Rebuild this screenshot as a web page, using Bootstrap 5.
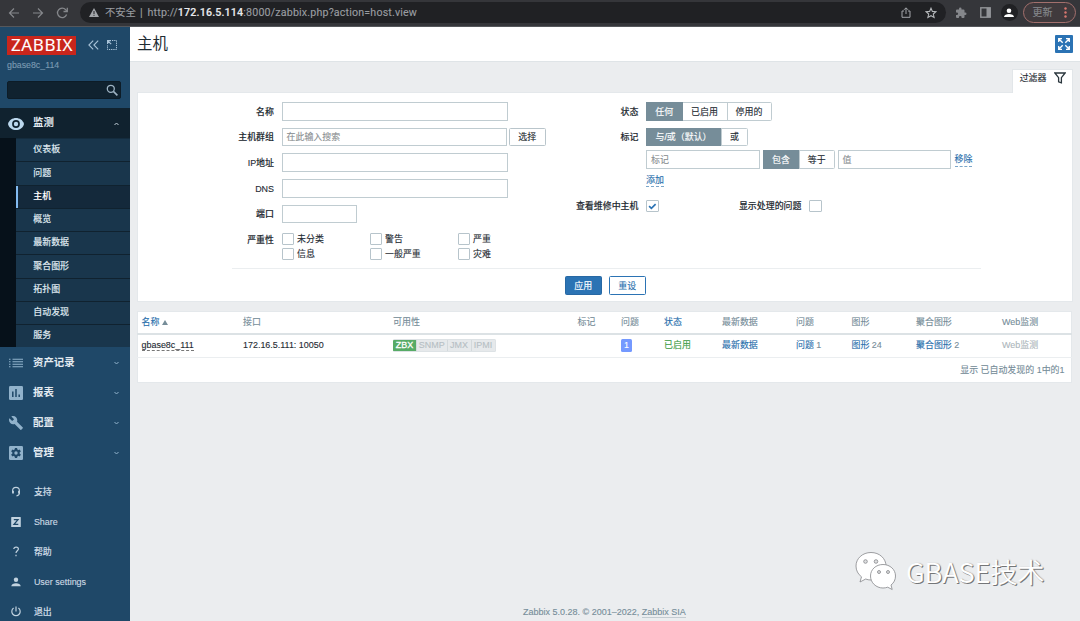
<!DOCTYPE html>
<html lang="zh-CN">
<head>
<meta charset="utf-8">
<title>主机</title>
<link href="https://cdn.jsdelivr.net/npm/bootstrap@5.3.0/dist/css/bootstrap.min.css" rel="stylesheet">
<style>
body{font-family:"Liberation Sans","Noto Sans CJK SC",sans-serif;font-size:8.95px;line-height:1.4;color:#1f2c33;background:#ebedef;height:621px;overflow:hidden;-webkit-text-stroke:.12px}
a,a:hover{text-decoration:none;color:#2a70ad}
svg{display:block;flex:none}
.browser{height:27px;background:#35363a;border-bottom:1px solid #55575b;color:#9a9da1;padding:0 4px 1px 8px}
.address{width:866px;height:20.5px;margin-left:11px;border-radius:11px;background:#202124;padding:0 9px 0 9px;font-size:10.3px}
.address span{position:relative;top:1px}
.url{font-family:Roboto,sans-serif;font-size:10.7px;letter-spacing:.16px}
.url b{color:#e8eaed;font-weight:500}
.avatar{width:17px;height:17px;background:#202124;border-radius:50%}
.update{width:53px;height:21.5px;border:1.4px solid #a3706d;border-radius:11px;background:#403a3d;font-size:10px;color:#85888c}
.side{width:129.5px;height:594px;background:#1f4868;color:#d5e0e9}
.logo-z{background:#c9261c;color:#fff;width:69px;height:18.5px;font-family:"Noto Sans",sans-serif;font-size:17px;line-height:18px;text-align:center;letter-spacing:.6px;padding-left:1px;white-space:nowrap}
.server{font-size:8.8px;color:#7b9ab2;margin:4.5px 0 0 7px;height:13px}
.find{margin:8.5px 9px 0 6.5px;height:18.5px;background:#10222f;border:1px solid #0d1c27;border-radius:2px;padding-right:2px}
.mitem{height:30px;padding:1px 0 0 8px;font-size:10.4px;font-weight:700;color:#e3ebf1;-webkit-text-stroke:0}
.mitem svg:first-child{width:16px}
.mitem span{margin-left:9px}
.mitem .chev{margin:1px 10.5px 0 auto}
.mitem.open{background:#10222f;margin-top:9px}
.sub{padding-left:16px;background:#06111a}
.sub a{display:flex;align-items:center;height:23.27px;background:#19364c;border-top:1px solid #10222f;color:#dce5ec;padding:0 0 1px 17.3px;font-weight:500}
.sub a:first-child{border-top-color:#142c3e}
.sub a.sel{background:linear-gradient(#82baf0,#82baf0) 0 0/2.3px 100% no-repeat #14293b;color:#fff}
.low{height:30px;padding:1px 0 0 8px;color:#cddae4}
.low svg{width:16px}
.low span{margin-left:9.9px;font-weight:500}
.page-top{height:34.5px;background:#fff;border-bottom:1px solid #dfe4e7;padding:0 7px 0 7.5px;font-size:15.4px;-webkit-text-stroke:0}
.full{width:18.5px;height:18.5px;background:#2b73b4;border-radius:1px}
.content-pad{padding:7px 7.5px 0 7.5px}
.ftab{width:61px;height:24px;background:#fff;border:1px solid #e2e6e9;border-bottom:0;margin-bottom:-1px;padding-right:6px;gap:7px;position:relative}
.fpanel{height:210px;background:#fff;border:1px solid #e4e8eb}
.frow{display:flex;align-items:center;height:18.6px;margin-bottom:7px}
.flab{text-align:right;margin-right:7.5px;flex:none;font-weight:500;padding-top:1px}
.lcol{width:407.5px;padding-top:9.8px}
.lcol .flab{width:136px}
.rcol{padding-top:9.8px}
.rcol .flab{width:93px}
.inp{height:18.6px;border:1px solid #c0ccd1;background:#fff;padding:1px 4px 0;color:#8b8f92;display:flex;align-items:center}
.bt{height:18.6px;border:1px solid #b9c5cb;border-radius:1.5px;display:flex;align-items:center;justify-content:center;background:#fff;padding-top:1px}
.seg{display:flex;height:18.6px;border:1px solid #c0ccd1;border-radius:1.5px}
.seg span{display:flex;align-items:center;justify-content:center;border-left:1px solid #c0ccd1;padding-top:1px}
.seg span:first-child{background:#768d99;color:#fff;margin:-1px 0;border:0;margin-left:-1px}
.cb{width:12.5px;height:12.5px;border:1px solid #b7c4cb;border-radius:1px;flex:none;background:#fff}
.chk{display:grid;grid-template-columns:88px 88px 60px;row-gap:2.5px}
.chk div{display:flex;align-items:center;gap:3px;height:12.5px}
.chk b{font-weight:400;padding-top:1px}
.dash{border-bottom:1px dashed #7ba6c9;line-height:11.5px}
.acts{width:749px;margin:0 auto 0 93.5px;border-top:1px solid #ebeef0;gap:7.5px;padding:7.8px 0 0 333.5px}
.tbl{width:935px;table-layout:fixed;background:#fff;border:1px solid #e4e8eb;margin:9px 0 0;border-collapse:collapse}
.tbl th,.tbl td{padding:0 0 0 3.5px;vertical-align:middle;white-space:nowrap;font-weight:400}
.tbl th{height:22.5px;color:#768d99;border-bottom:2px solid #dce2e5}
.tbl tbody td{height:24px;border-bottom:1px solid #ebeef0;color:#768d99}
.tbl tfoot td{height:24.5px;text-align:right;padding:2px 6.5px 0 0;color:#768d99}
.av{display:inline-flex;height:12.5px;line-height:12.7px;border-radius:1.5px;overflow:hidden;background:#e6e9eb;color:#b6bfc4;vertical-align:middle;border:1px solid #dde2e5;border-left:0;margin-top:-1px}
.av span{border-left:1px solid #d3d9dc;text-align:center;margin:-1px 0}
.av span:first-child{background:#57ab66;color:#fff;border:0;-webkit-text-stroke:.3px #fff}
.num{display:inline-block;width:11px;height:13px;line-height:13px;background:#7499ff;color:#fff;border-radius:1.5px;text-align:center;vertical-align:middle}
.foot{position:absolute;left:523px;top:606px;color:#768d99;font-size:9px}
.foot span{border-bottom:1px solid #c3ccd1}
.mark-w{position:absolute;left:855px;top:551px;color:#fff;-webkit-text-stroke:0}
.mark-w b{font-weight:350;font-family:"Noto Sans CJK SC",sans-serif;font-size:27.3px;line-height:40px;text-shadow:1px 1px 0 #747678,1px 0 1px #a4a6a7;margin:-2px 0 0 6px;letter-spacing:-.15px}
</style>
<script src="https://cdn.jsdelivr.net/npm/bootstrap@5.3.0/dist/js/bootstrap.bundle.min.js"></script>
</head>
<body>
<header class="browser d-flex align-items-center">
 <svg width="12" height="12" viewBox="0 0 12 12" fill="none" stroke="#85878b" stroke-width="1.2"><path d="M11 6H1.5M6 1.5 1.5 6 6 10.500"/></svg>
 <svg class="ms-2 ps-1" width="16" height="12" viewBox="0 0 12 12" fill="none" stroke="#85878b" stroke-width="1.2"><path d="M1 6h9.500M6 1.500 10.500 6 6 10.500"/></svg>
 <svg style="margin-left:12px" width="13" height="12" viewBox="0 0 13 12" fill="none" stroke="#85878b" stroke-width="1.3"><path d="M10.600 7.500A4.700 4.700 0 1 1 9.700 2.700L11 4"/><path d="M11.300.8v3.700H7.500"/></svg>
 <div class="address d-flex align-items-center">
  <svg width="10" height="9" viewBox="0 0 10 9"><path d="M5 0 10 9H0z" fill="#a3a6aa"/><path d="M5 3v3M5 6.800v1" stroke="#202124"/></svg>
  <span style="margin-left:6px">不安全</span><span style="margin:0 5px 0 4px">|</span><span class="url">http://<b>172.16.5.114</b>:8000/zabbix.php?action=host.view</span>
  <svg class="ms-auto" style="margin-right:-2px" width="10" height="11" viewBox="0 0 10 11" fill="none" stroke="#a3a6aa"><path d="M3 4H1v6.300h8V4H7M5 7V1M3 2.800 5 .8l2 2"/></svg>
  <svg style="margin:0 0 0 16px" width="12" height="12" viewBox="0 0 12 12" fill="none" stroke="#b4b7ba" stroke-width="1.1"><path d="m6 1.200 1.400 3.200 3.500.3-2.600 2.300.8 3.500L6 8.700l-3.100 1.800.8-3.500L1.100 4.700l3.500-.3z"/></svg>
 </div>
 <svg style="margin-left:9px" width="12" height="12" viewBox="0 0 24 24" fill="#85878b"><path d="M20.500 11H19V7a2 2 0 0 0-2-2h-4V3.500a2.500 2.500 0 0 0-5 0V5H4a2 2 0 0 0-2 2v3.800h1.500a2.700 2.700 0 0 1 0 5.400H2V20a2 2 0 0 0 2 2h3.800v-1.500a2.700 2.700 0 0 1 5.400 0V22H17a2 2 0 0 0 2-2v-4h1.500a2.500 2.500 0 0 0 0-5z"/></svg>
 <svg style="margin-left:13px" width="11" height="11" viewBox="0 0 11 11"><rect x=".8" y=".8" width="9.400" height="9.400" fill="none" stroke="#929498" stroke-width="1.400"/><path d="M6.500 1h4v9h-4z" fill="#929498"/></svg>
 <div class="avatar d-flex align-items-center justify-content-center" style="margin-left:9.500px"><svg width="10" height="10" viewBox="0 0 10 10" fill="#fff"><circle cx="5" cy="2.700" r="2.300"/><path d="M0 9c0-4 10-4 10 0z"/></svg></div>
 <div class="update d-flex align-items-center justify-content-between" style="margin-left:5px;padding:0 8px 0 9px">更新<svg width="3" height="11" viewBox="0 0 3 11" fill="#d9776f"><circle cx="1.500" cy="1.500" r="1.200"/><circle cx="1.500" cy="5.500" r="1.200"/><circle cx="1.500" cy="9.500" r="1.200"/></svg></div>
</header>
<div class="d-flex">
 <aside class="side flex-shrink-0">
  <div class="d-flex align-items-center" style="padding:9px 0 0 7px">
   <div class="logo-z">ZABBIX</div>
   <svg style="margin-left:12px" width="11" height="10" viewBox="0 0 11 10" fill="none" stroke="#a9c3d8" stroke-width="1.100"><path d="M5.200.6.9 5l4.300 4.400M10.200.6 5.900 5l4.300 4.400"/></svg>
   <svg style="margin-left:7.500px" width="10" height="10" viewBox="0 0 10 10" fill="none" stroke="#a9c3d8"><path d="M5 .5h4.500v9h-9V5" stroke-dasharray="1.300 .9"/><path d="M.6 4V.6H4M.8.8l3.400 3.400" stroke-width="1.200"/></svg>
  </div>
  <div class="server">gbase8c_114</div>
  <div class="find d-flex align-items-center justify-content-end"><svg width="12" height="12" viewBox="0 0 12 12" fill="none" stroke="#9fb4c4"><circle cx="4.800" cy="4.800" r="3.500" stroke-width="1.300"/><path d="m7.400 7.400 4 4" stroke-width="1.600"/></svg></div>
  <div class="mitem open d-flex align-items-center"><svg width="16" height="12" viewBox="0 0 16 12"><path d="M0 6C2-2 14-2 16 6 14 14 2 14 0 6z" fill="#bcd8ee"/><circle cx="8" cy="6" r="3.900" fill="#10222f"/><circle cx="8" cy="6" r="2.200" fill="#bcd8ee"/></svg><span>监测</span><svg class="chev" width="5" height="4" viewBox="0 0 5 4" fill="none" stroke="#c2d0da"><path d="m.5 3 2-2 2 2"/></svg></div>
  <nav class="sub"><a href="#">仪表板</a><a href="#">问题</a><a href="#" class="sel">主机</a><a href="#">概览</a><a href="#">最新数据</a><a href="#">聚合图形</a><a href="#">拓扑图</a><a href="#">自动发现</a><a href="#">服务</a></nav>
  <div class="mitem d-flex align-items-center"><svg height="10" viewBox="0 0 16 10" stroke="#91b2cb" stroke-width="1.100"><path d="M1 1.200h1.500M4.500 1.200H15M1 3.700h1.500M4.500 3.700H15M1 6.200h1.500M4.500 6.200H15M1 8.700h1.500M4.500 8.700H15"/></svg><span>资产记录</span><svg class="chev" width="5" height="4" viewBox="0 0 5 4" fill="none" stroke="#91b2cb"><path d="m.5 1 2 2 2-2"/></svg></div>
  <div class="mitem d-flex align-items-center"><svg height="14" viewBox="0 0 16 14"><rect x="1" width="14" height="14" rx="1.200" fill="#91b2cb"/><path d="M4.800 5.500V11M8 3v8M11.200 8.500V11" stroke="#1f4868" stroke-width="1.500"/></svg><span>报表</span><svg class="chev" width="5" height="4" viewBox="0 0 5 4" fill="none" stroke="#91b2cb"><path d="m.5 1 2 2 2-2"/></svg></div>
  <div class="mitem d-flex align-items-center"><svg height="14" viewBox="0 0 24 22"><path fill="#91b2cb" d="m22.700 18-9.100-9.100c.9-2.300.4-5-1.500-6.900-2-2-5-2.400-7.400-1.300L9 5 6 8 1.600 3.700C.4 6.100.9 9.100 2.900 11.100c1.900 1.900 4.600 2.400 6.900 1.500l9.100 9.100c.4.4 1 .4 1.400 0l2.300-2.300c.5-.4.5-1.100.1-1.400z"/></svg><span>配置</span><svg class="chev" width="5" height="4" viewBox="0 0 5 4" fill="none" stroke="#91b2cb"><path d="m.5 1 2 2 2-2"/></svg></div>
  <div class="mitem d-flex align-items-center"><svg height="14" viewBox="0 0 16 14"><rect x="1" width="14" height="14" rx="1.200" fill="#91b2cb"/><circle cx="8" cy="7" r="3.700" fill="#1f4868"/><path d="M8 2v10M3.700 4.500l8.600 5M12.300 4.500l-8.600 5" stroke="#1f4868" stroke-width="2.300"/><circle cx="8" cy="7" r="1.700" fill="#91b2cb"/></svg><span>管理</span><svg class="chev" width="5" height="4" viewBox="0 0 5 4" fill="none" stroke="#91b2cb"><path d="m.5 1 2 2 2-2"/></svg></div>
  <div class="low d-flex align-items-center" style="margin-top:9px"><svg height="11" viewBox="0 0 16 11" fill="none" stroke="#c1d2df"><path d="M4.600 6.500V4.800a3.400 3.400 0 0 1 6.800 0v2.300c0 1.700-1 2.500-2.900 2.800" stroke-width="1.100"/><path d="M5 4.800v2.700M11 4.800v2.700" stroke-width="1.800"/></svg><span>支持</span></div>
  <div class="low d-flex align-items-center"><svg height="10" viewBox="0 0 16 10"><rect x="3.200" width="9.600" height="10" rx=".6" fill="#c1d2df"/><path d="M5.800 2.600h4.200L6 7.400h4.300" fill="none" stroke="#1f4868" stroke-width="1.300"/></svg><span>Share</span></div>
  <div class="low d-flex align-items-center"><svg height="11" viewBox="0 0 16 11" fill="none" stroke="#c1d2df" stroke-width="1.200"><path d="M5.800 3C6 .4 10.400.4 10.400 3 10.400 4.700 8 4.900 8 7M8 8.700v1.500"/></svg><span>帮助</span></div>
  <div class="low d-flex align-items-center"><svg height="10" viewBox="0 0 16 10" fill="#c1d2df"><circle cx="8" cy="2.700" r="2.200"/><path d="M3.300 9.300c0-4 9.400-4 9.400 0z"/></svg><span>User settings</span></div>
  <div class="low d-flex align-items-center"><svg height="11" viewBox="0 0 16 11" fill="none" stroke="#c1d2df" stroke-width="1.200"><path d="M5.600 2a4.200 4.200 0 1 0 4.800 0M8 .5v5"/></svg><span>退出</span></div>
 </aside>
 <main class="flex-grow-1">
  <div class="page-top d-flex align-items-center justify-content-between"><span>主机</span>
   <div class="full d-flex align-items-center justify-content-center"><svg width="12" height="12" viewBox="0 0 12 12" fill="none" stroke="#fff" stroke-width="1.300"><path d="M.7 4V.7H4M.7.7 4.700 4.700M8 .7h3.300V4M11.300.7l-4 4M.7 8v3.300H4M.7 11.300l4-4M8 11.300h3.300V8M11.300 11.300l-4-4"/></svg></div>
  </div>
  <div class="content-pad">
   <div class="ftab ms-auto d-flex align-items-center justify-content-end" style="padding-bottom:6px">过滤器<svg width="12" height="12" viewBox="0 0 12 12" fill="none" stroke="#2a363d" stroke-width="1.300"><path d="M.9 1h10.200L7.400 5.700v5.200l-2.800-1V5.700z"/></svg></div>
   <section class="fpanel">
    <div class="d-flex" style="height:175px">
     <div class="lcol">
      <div class="frow"><label class="flab">名称</label><div class="inp" style="width:226px"></div></div>
      <div class="frow"><label class="flab">主机群组</label><div class="inp" style="width:226px">在此输入搜索</div><div class="bt" style="width:36.500px;margin-left:2.300px">选择</div></div>
      <div class="frow"><label class="flab">IP地址</label><div class="inp" style="width:226px"></div></div>
      <div class="frow"><label class="flab">DNS</label><div class="inp" style="width:226px"></div></div>
      <div class="frow"><label class="flab">端口</label><div class="inp" style="width:75.500px"></div></div>
      <div class="d-flex align-items-start" style="padding-top:2.500px"><label class="flab">严重性</label><div class="chk"><div><i class="cb"></i><b>未分类</b></div><div><i class="cb"></i><b>警告</b></div><div><i class="cb"></i><b>严重</b></div><div><i class="cb"></i><b>信息</b></div><div><i class="cb"></i><b>一般严重</b></div><div><i class="cb"></i><b>灾难</b></div></div></div>
     </div>
     <div class="rcol">
      <div class="frow"><label class="flab">状态</label><div class="seg"><span style="width:36.500px">任何</span><span style="width:44px;border:0">已启用</span><span style="width:44px">停用的</span></div></div>
      <div class="frow" style="margin-bottom:3.600px"><label class="flab">标记</label><div class="seg"><span style="width:75px">与/或（默认）</span><span style="width:26px">或</span></div></div>
      <div class="frow" style="margin-left:100.500px"><div class="inp" style="width:113.500px">标记</div><div class="seg" style="margin:0 3px 0 3.500px"><span style="width:36px">包含</span><span style="width:34.500px">等于</span></div><div class="inp" style="width:113.500px">值</div><a href="#" class="dash" style="margin:2px 0 0 3.500px">移除</a></div>
      <div class="d-flex" style="margin:-1px 0 0 100.500px;height:24.800px"><a href="#" class="dash align-self-start">添加</a></div>
      <div class="d-flex align-items-center"><label class="flab">查看维修中主机</label><i class="cb"><svg width="10.500" height="10.500" viewBox="0 0 10 10" fill="none" stroke="#2b73b4" stroke-width="1.600"><path d="m2 4.800 2.200 2.200L8.200 3"/></svg></i><label class="flab" style="width:143px">显示处理的问题</label><i class="cb"></i></div>
     </div>
    </div>
    <div class="acts d-flex"><div class="bt" style="width:36.500px;background:#2b73b4;border-color:#2768a4;color:#fff">应用</div><div class="bt" style="width:36.500px;border-color:#2b73b4;color:#2a70ad">重设</div></div>
   </section>
   <table class="tbl">
    <colgroup><col style="width:102px"><col style="width:150px"><col style="width:184.500px"><col style="width:43.500px"><col style="width:43px"><col style="width:58px"><col style="width:74px"><col style="width:55.500px"><col style="width:64.500px"><col style="width:86px"><col></colgroup>
    <thead><tr><th><a href="#">名称</a> <svg class="d-inline" width="6" height="5" viewBox="0 0 6 5"><path d="M3 0 6 5H0z" fill="#768d99"/></svg></th><th>接口</th><th>可用性</th><th>标记</th><th>问题</th><th><a href="#">状态</a></th><th>最新数据</th><th>问题</th><th>图形</th><th>聚合图形</th><th>Web监测</th></tr></thead>
    <tbody><tr><td><span class="dash" style="color:#1f2c33;border-color:#777">gbase8c_111</span></td><td style="color:#1f2c33">172.16.5.111: 10050</td><td><div class="av"><span style="width:23px">ZBX</span><span style="width:30.500px">SNMP</span><span style="width:24px">JMX</span><span style="width:24px">IPMI</span></div></td><td></td><td><span class="num">1</span></td><td style="color:#429e47">已启用</td><td><a href="#">最新数据</a></td><td><a href="#">问题</a> 1</td><td><a href="#">图形</a> 24</td><td><a href="#">聚合图形</a> 2</td><td style="color:#acb6bb">Web监测</td></tr></tbody>
    <tfoot><tr><td colspan="11">显示 已自动发现的 1中的1</td></tr></tfoot>
   </table>
  </div>
 </main>
</div>
<footer class="foot">Zabbix 5.0.28. © 2001–2022, <span>Zabbix SIA</span></footer>
<div class="mark-w d-flex align-items-center">
 <svg width="45" height="42" viewBox="0 0 45 42" stroke="#85878a" stroke-width=".8"><path d="M16 1.500c8.500 0 15 6 15 13.500s-6.500 14-15 14c-2 0-3.800-.3-5.300-1L5 31l1.500-5.200C3 23.200 1 19.400 1 15 1 7.500 7.500 1.500 16 1.500z" fill="#fff"/><circle cx="10.500" cy="10.500" r="1.800" fill="#dedfe0"/><circle cx="21" cy="10.500" r="1.800" fill="#dedfe0"/><path d="M28 13.500c7 0 12.500 5 12.500 11.500 0 3.700-1.700 7-4.500 9l1.200 4.500-4.500-2.300c-1.400.5-3 .8-4.700.8-7 0-12.500-5.400-12.500-12S21 13.500 28 13.500z" fill="#fff"/><circle cx="24" cy="21" r="1.500" fill="#dedfe0"/><circle cx="33" cy="21" r="1.500" fill="#dedfe0"/></svg><b>GBASE技术</b>
</div>
</body>
</html>
